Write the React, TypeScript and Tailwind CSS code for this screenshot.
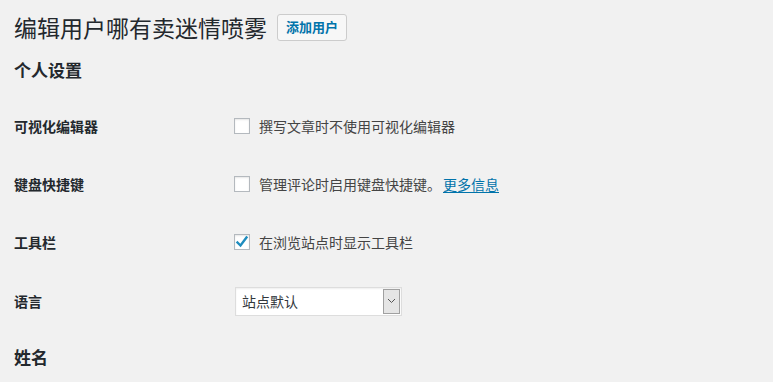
const font = "font-['Microsoft_YaHei','Noto_Sans_CJK_SC',sans-serif]";

function Box({ checked }: { checked?: boolean }) {
  return (
    <span className="flex h-4 w-4 shrink-0 items-center justify-center border border-[#b4b9be] bg-white shadow-[inset_0_1px_2px_rgba(0,0,0,0.1)]">
      {checked && (
        <svg width="14" height="14" viewBox="0 0 14 14" fill="none">
          <path d="M2.5 7.5 L5.5 10.5 L11.5 2.5" stroke="#1e8cbe" strokeWidth="2.4" strokeLinecap="square" />
        </svg>
      )}
    </span>
  );
}

function Row({ label, tall, children }: { label: string; tall?: boolean; children: React.ReactNode }) {
  return (
    <div className={`flex items-center ${tall ? 'h-[60px]' : 'h-[58px]'}`}>
      <div className="w-[220px] shrink-0 text-[14px] font-semibold text-[#23282d]">{label}</div>
      <div className="flex items-center">{children}</div>
    </div>
  );
}

export default function App() {
  return (
    <div className={`${font} min-h-[382px] w-full bg-[#f1f1f1] pl-[14px] text-[#23282d]`}>
      <div className="flex items-center pt-[12px]">
        <h1 className="text-[23px] font-normal leading-[30px] text-[#23282d]">编辑用户哪有卖迷情喷雾</h1>
        <span className="ml-[10px] flex h-[27px] items-center rounded-[3px] border border-[#ccc] bg-[#f7f7f7] px-[8px] text-[13px] font-semibold text-[#0073aa]">
          添加用户
        </span>
      </div>
      <h2 className="mt-[16px] text-[17px] font-semibold leading-[24px]">个人设置</h2>
      <div className="mt-[15px]">
        <Row label="可视化编辑器">
          <Box />
          <span className="ml-[9px] text-[14px] text-[#444]">撰写文章时不使用可视化编辑器</span>
        </Row>
        <Row label="键盘快捷键">
          <Box />
          <span className="ml-[9px] text-[14px] text-[#444]">管理评论时启用键盘快捷键。</span>
          <a className="ml-[2px] text-[14px] text-[#0073aa] underline underline-offset-2">更多信息</a>
        </Row>
        <Row label="工具栏">
          <Box checked />
          <span className="ml-[9px] text-[14px] text-[#444]">在浏览站点时显示工具栏</span>
        </Row>
        <Row label="语言" tall>
          <div className="ml-[1px] flex h-[29px] w-[167px] items-center border border-[#ddd] bg-white pl-[6px] pr-[1px] shadow-[inset_0_1px_2px_rgba(0,0,0,0.07)]">
            <span className="flex-1 text-[14px] text-[#32373c]">站点默认</span>
            <span className="flex h-[25px] w-[17px] items-center justify-center border border-[#a0a0a0] bg-[#e5e5e5]">
              <svg width="9" height="6" viewBox="0 0 9 6" fill="none">
                <path d="M1 1 L4.5 4.5 L8 1" stroke="#555" strokeWidth="1" />
              </svg>
            </span>
          </div>
        </Row>
      </div>
      <h2 className="mt-[14px] text-[17px] font-semibold leading-[24px]">姓名</h2>
    </div>
  );
}
